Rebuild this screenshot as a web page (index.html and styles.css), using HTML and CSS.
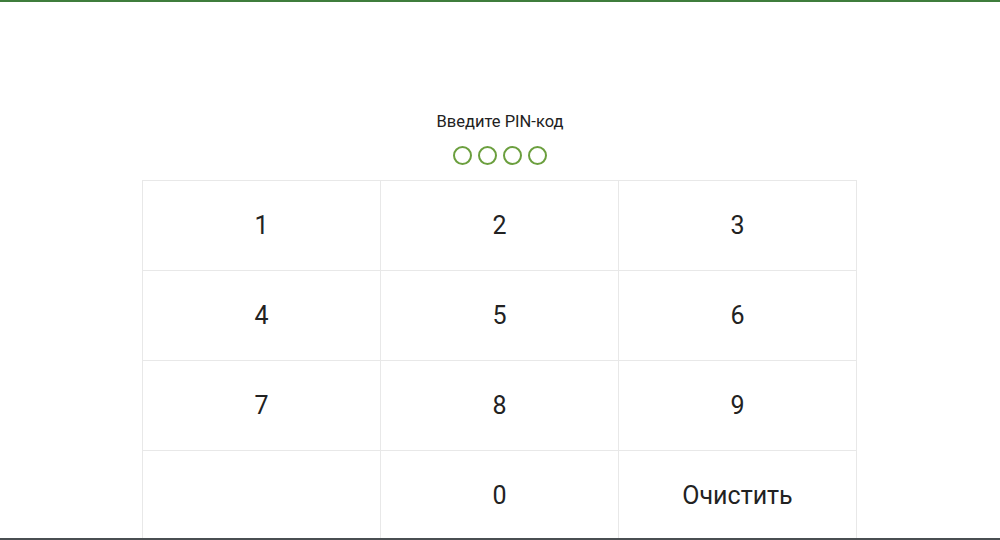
FILE: index.html
```html
<!DOCTYPE html>
<html lang="ru">
<head>
<meta charset="utf-8">
<link rel="stylesheet" href="styles.css">
</head>
<body>
<div class="topbar"></div>
<main class="pin">
  <div class="title">Введите PIN-код</div>
  <div class="dots">
    <span class="dot"></span><span class="dot"></span><span class="dot"></span><span class="dot"></span>
  </div>
  <div class="pad">
    <div class="key">1</div>
    <div class="key">2</div>
    <div class="key">3</div>
    <div class="key">4</div>
    <div class="key">5</div>
    <div class="key">6</div>
    <div class="key">7</div>
    <div class="key">8</div>
    <div class="key">9</div>
    <div class="key"></div>
    <div class="key">0</div>
    <div class="key">Очистить</div>
  </div>
</main>
<div class="bottombar"></div>
</body>
</html>
```
FILE: styles.css
```css
html, body {
  margin: 0;
  padding: 0;
  background: #fff;
  overflow: hidden;
  height: 540px;
}
body {
  font-family: Roboto, "Noto Sans", Arial, sans-serif;
  color: #222;
}
.topbar {
  height: 2px;
  background: #3f7d3c;
}
.pin {
  display: flex;
  flex-direction: column;
  align-items: center;
  padding-top: 110px;
}
.title {
  font-size: 16.5px;
  line-height: 20px;
  color: #222;
}
.dots {
  display: flex;
  gap: 6px;
  margin-top: 14px;
  margin-right: 1px;
}
.dot {
  width: 15px;
  height: 15px;
  border: 2px solid #6b9f3e;
  border-radius: 50%;
}
.pad {
  margin-top: 15px;
  display: grid;
  grid-template-columns: 238px 238px 238px;
  grid-auto-rows: 90px;
  border-top: 1px solid #e8e8e8;
  border-left: 1px solid #e8e8e8;
  margin-right: 1px;
}
.key {
  border-right: 1px solid #e8e8e8;
  border-bottom: 1px solid #e8e8e8;
  display: flex;
  align-items: center;
  justify-content: center;
  font-size: 25px;
  color: #222;
}
.bottombar {
  position: fixed;
  left: 0;
  right: 0;
  bottom: 0;
  height: 2px;
  background: #4a4f52;
}
```
